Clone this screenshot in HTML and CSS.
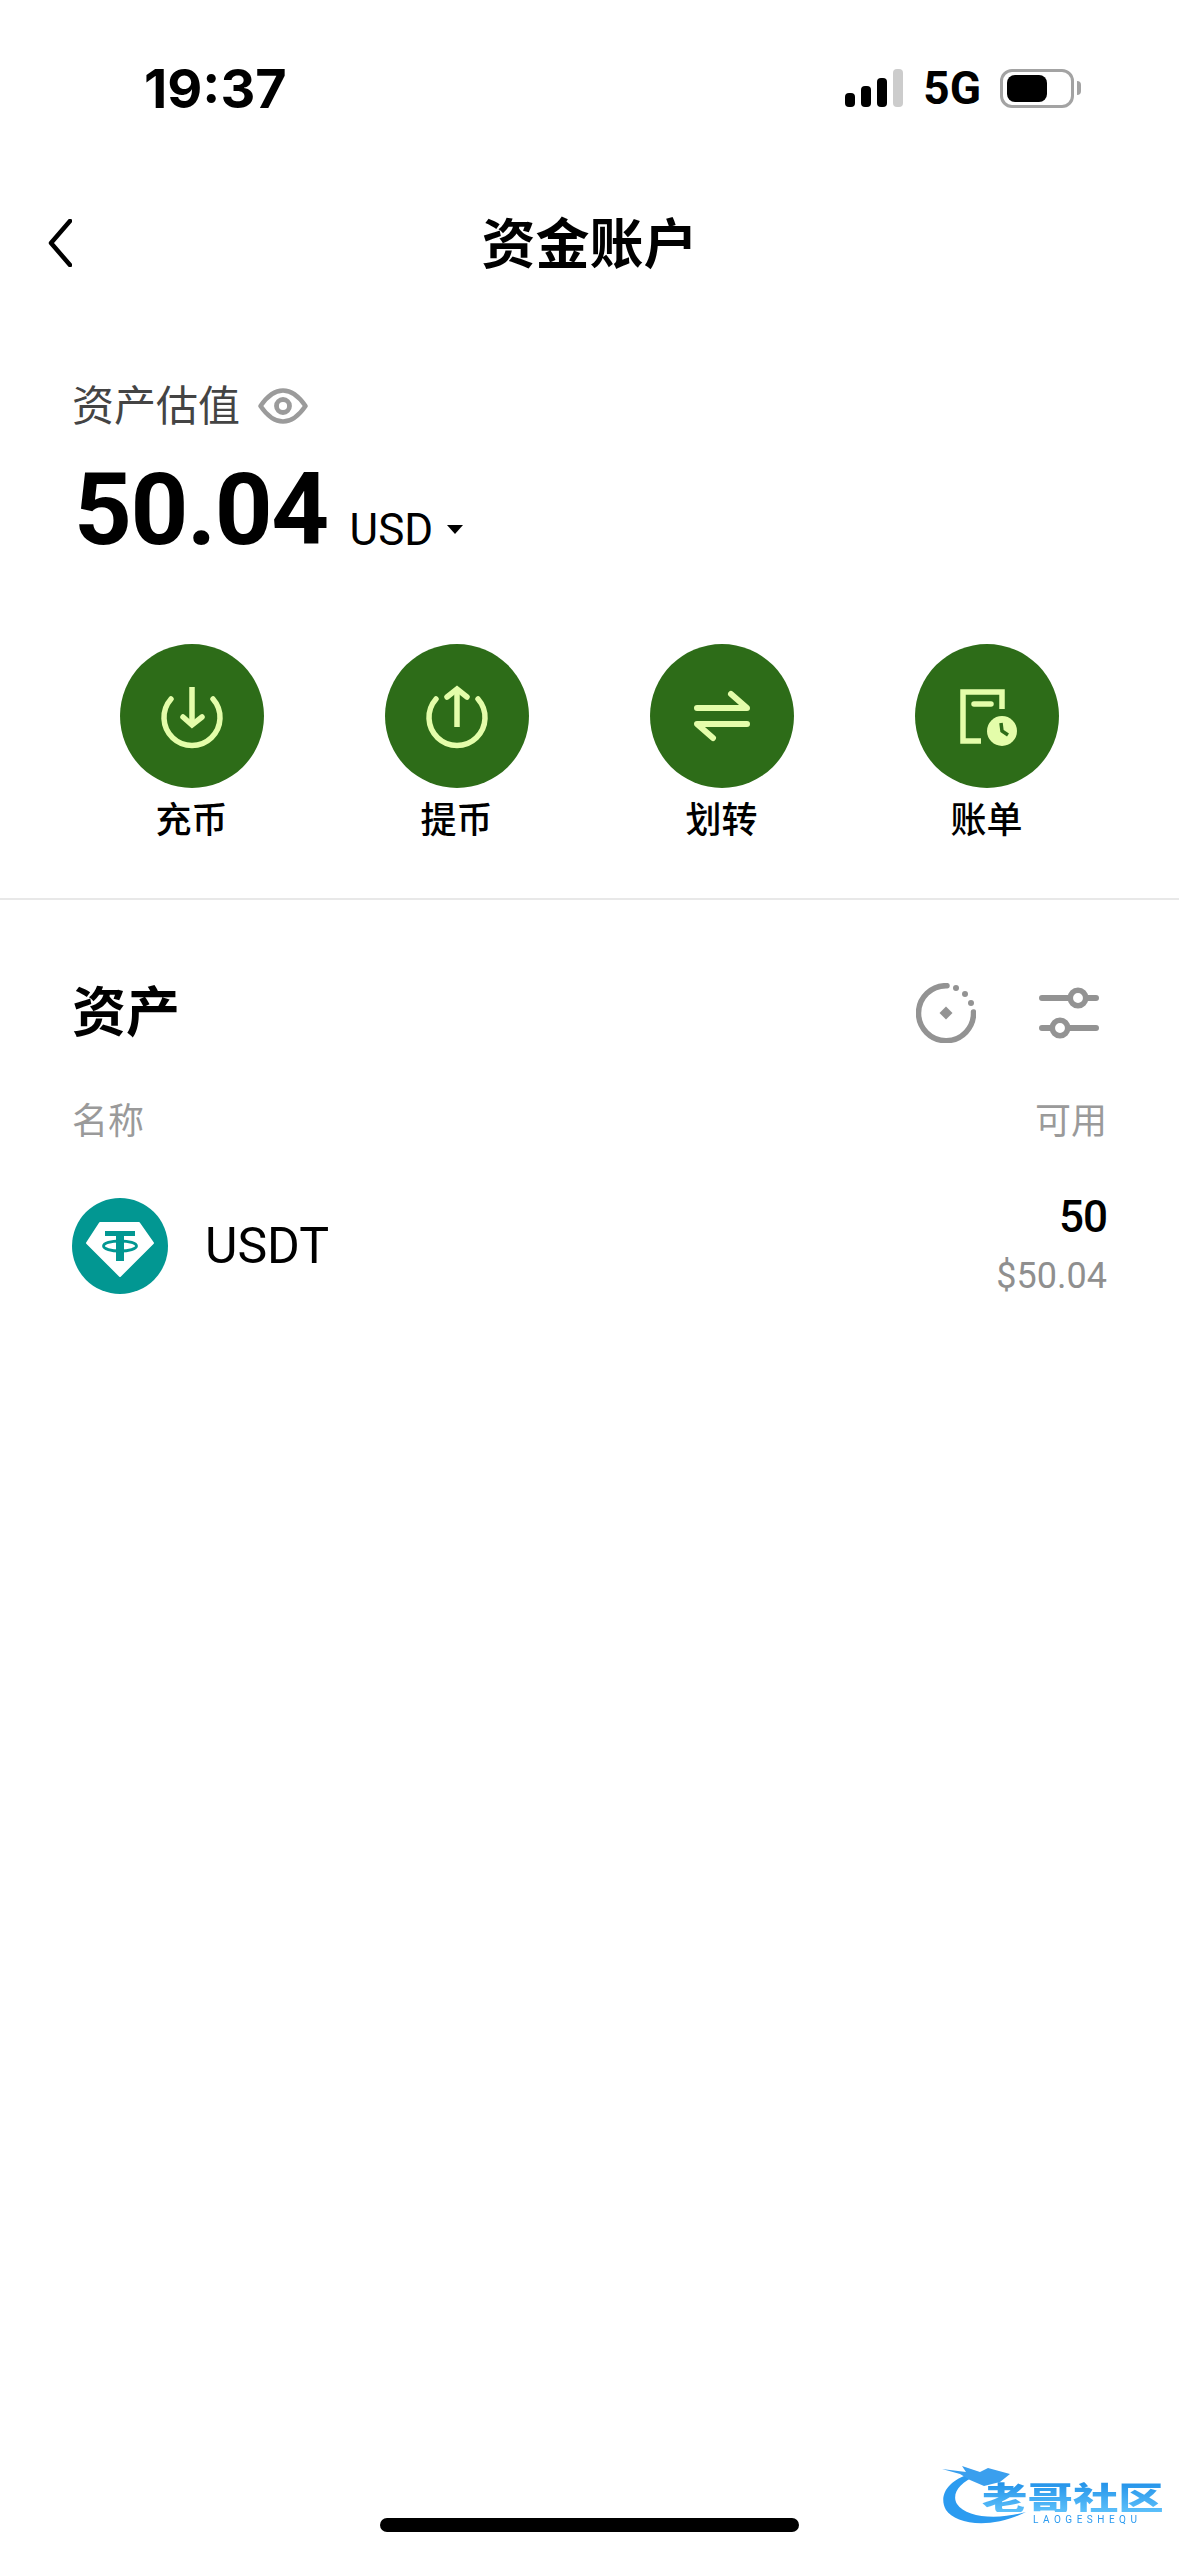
FILE: index.html
```html
<!DOCTYPE html>
<html lang="zh-CN">
<head>
    <meta charset="UTF-8">
    <meta name="viewport" content="width=device-width, initial-scale=1.0">
    <title>资金账户</title>
    <link rel="stylesheet" href="styles.css">
</head>
<body>
    <div class="page">

        <!-- Status bar -->
        <div class="status-bar">
            <span class="time">19:37</span>
            <div class="status-right">
                <div class="signal">
                    <i class="bar bar1"></i>
                    <i class="bar bar2"></i>
                    <i class="bar bar3"></i>
                    <i class="bar bar4"></i>
                </div>
                <span class="network">5G</span>
                <div class="battery"><i class="battery-fill"></i></div>
                <i class="battery-nub"></i>
            </div>
        </div>

        <!-- Nav -->
        <div class="nav">
            <svg class="back" viewBox="0 0 24 48" width="24" height="48">
                <polyline points="22,2 3,24 22,46" fill="none" stroke="#000" stroke-width="4.500" stroke-linecap="round" stroke-linejoin="round"/>
            </svg>
            <h1 class="nav-title">资金账户</h1>
        </div>

        <!-- Balance -->
        <div class="summary">
            <div class="summary-label">
                <span>资产估值</span>
                <svg viewBox="0 0 50 36" width="50" height="36">
                    <path d="M2.5 18C10 7 18 2.5 25 2.5S40 7 47.500 18C40 29 32 33.500 25 33.500S10 29 2.500 18Z" fill="none" stroke="#9b9b9b" stroke-width="4.500" stroke-linejoin="round"/>
                    <circle cx="25" cy="18" r="6.500" fill="none" stroke="#9b9b9b" stroke-width="4.800"/>
                </svg>
            </div>
            <div class="summary-amount">
                <span class="amount">50.04</span>
                <span class="currency">USD</span>
                <i class="caret"></i>
            </div>
        </div>

        <!-- Actions -->
        <div class="actions">
            <div class="action">
                <svg class="action-icon" viewBox="0 0 144 144">
                    <circle cx="72" cy="72" r="72" fill="#2d6c18"/>
                    <g fill="none" stroke="#e4fdaa" stroke-width="5.500" stroke-linecap="round" stroke-linejoin="miter">
                        <path d="M51 55A28 28 0 1 0 93 55"/>
                        <path d="M72 43V80" stroke-linecap="butt"/>
                        <path d="M63 73L72 81L82 73"/>
                    </g>
                </svg>
                <span>充币</span>
            </div>
            <div class="action">
                <svg class="action-icon" viewBox="0 0 144 144">
                    <circle cx="72" cy="72" r="72" fill="#2d6c18"/>
                    <g fill="none" stroke="#e4fdaa" stroke-width="5.500" stroke-linecap="round" stroke-linejoin="miter">
                        <path d="M51 55A28 28 0 1 0 93 55"/>
                        <path d="M72 46V83" stroke-linecap="butt"/>
                        <path d="M62 53L72 45L82 53"/>
                    </g>
                </svg>
                <span>提币</span>
            </div>
            <div class="action">
                <svg class="action-icon" viewBox="0 0 144 144">
                    <circle cx="72" cy="72" r="72" fill="#2d6c18"/>
                    <g fill="none" stroke="#e4fdaa" stroke-width="6" stroke-linecap="round" stroke-linejoin="round">
                        <path d="M47 64H97L81 50"/>
                        <path d="M97 80H47L63 94"/>
                    </g>
                </svg>
                <span>划转</span>
            </div>
            <div class="action">
                <svg class="action-icon" viewBox="0 0 144 144">
                    <circle cx="72" cy="72" r="72" fill="#2d6c18"/>
                    <path d="M66 97H48V48H87V65" fill="none" stroke="#e4fdaa" stroke-width="5.500"/>
                    <path d="M59 60H76" fill="none" stroke="#e4fdaa" stroke-width="5.500" stroke-linecap="round"/>
                    <circle cx="87" cy="87" r="15" fill="#e4fdaa"/>
                    <path d="M86 79L87 87L93 91" fill="none" stroke="#2d6c18" stroke-width="3.500"/>
                </svg>
                <span>账单</span>
            </div>
        </div>

        <div class="divider"></div>

        <!-- Assets -->
        <div class="assets">
            <div class="assets-header">
                <h2 class="assets-title">资产</h2>
                <div class="assets-tools">
                    <svg viewBox="0 0 60 60" width="60" height="60">
                        <path d="M31 2.700A27.500 27.500 0 1 0 57.500 29" fill="none" stroke="#939393" stroke-width="5.500" stroke-linecap="round"/>
                        <circle cx="40" cy="5" r="3" fill="#939393"/>
                        <circle cx="49" cy="11" r="3" fill="#939393"/>
                        <circle cx="55" cy="20" r="3" fill="#939393"/>
                        <path d="M30 23.500L36.500 30L30 36.500L23.500 30Z" fill="#939393"/>
                    </svg>
                    <svg viewBox="0 0 60 60" width="60" height="60">
                        <path d="M3 15H57M3 45H57" fill="none" stroke="#939393" stroke-width="6" stroke-linecap="round"/>
                        <circle cx="39" cy="15" r="7.700" fill="#fff" stroke="#939393" stroke-width="5.500"/>
                        <circle cx="21" cy="45" r="7.700" fill="#fff" stroke="#939393" stroke-width="5.500"/>
                    </svg>
                </div>
            </div>

            <div class="table-head">
                <span>名称</span>
                <span>可用</span>
            </div>

            <div class="asset-row">
                <div class="asset-name">
                    <svg viewBox="0 0 96 96" width="96" height="96">
                        <circle cx="48" cy="48" r="48" fill="#029792"/>
                        <path d="M28 25H67L81 45L48 78L15 45Z" fill="#fff" stroke="#fff" stroke-width="2" stroke-linejoin="round"/>
                        <path d="M33 33H63V38H52V63H44V38H33Z" fill="#029792"/>
                        <ellipse cx="48" cy="48" rx="16.500" ry="5" fill="none" stroke="#029792" stroke-width="2.800"/>
                    </svg>
                    <span>USDT</span>
                </div>
                <div class="asset-values">
                    <span class="asset-qty">50</span>
                    <span class="asset-usd">$50.04</span>
                </div>
            </div>
        </div>

        <div class="home-bar"></div>

        <!-- Watermark -->
        <div class="watermark">
            <svg class="watermark-logo" viewBox="0 0 100 70" width="100" height="70">
                <path d="M30 12C8 18 -2 34 6 48C15 62 50 68 86 50C58 58 26 56 17 42C11 32 20 20 36 14Z" fill="#2b9bf0"/>
                <path d="M2 7L26 10L22 4L40 10L48 6L70 12L60 20L44 24L30 18L20 12Z" fill="#3a9fee"/>
            </svg>
            <span class="watermark-name">老哥社区</span>
            <span class="watermark-sub">LAOGESHEQU</span>
        </div>
    </div>
</body>
</html>
```

FILE: styles.css
```css
* {
    box-sizing: border-box;
}

body {
    margin: 0;
    background-color: #fff;
    color: #000;
    font-family: Roboto, "Noto Sans CJK SC", sans-serif;
}

h1, h2 {
    margin: 0;
}

i {
    display: block;
}

svg {
    display: block;
}

.page {
    position: relative;
    display: flex;
    flex-direction: column;
    width: 1179px;
    height: 2556px;
    overflow: hidden;
}

/* Status bar */
.status-bar {
    display: flex;
    justify-content: space-between;
    align-items: center;
    height: 176px;
    padding: 0 98px 0 144px;
}

.time {
    font-family: Inter, sans-serif;
    font-size: 54px;
    font-weight: 700;
}

.status-right {
    display: flex;
    align-items: center;
}

.signal {
    display: flex;
    align-items: flex-end;
    gap: 6px;
    height: 38px;
    margin-right: 20px;
}

.bar {
    width: 10px;
    background: #000;
    border-radius: 4px;
}

.bar1 { height: 14px; }
.bar2 { height: 21px; }
.bar3 { height: 29px; }
.bar4 { height: 38px; background: #ccc; }

.network {
    font-size: 46px;
    font-weight: 700;
    margin-right: 19px;
}

.battery {
    display: flex;
    align-items: center;
    width: 74px;
    height: 39px;
    padding: 0 4px;
    border: 3px solid #a3a3a3;
    border-radius: 12px;
}

.battery-fill {
    width: 40px;
    height: 27px;
    background: #000;
    border-radius: 8px;
}

.battery-nub {
    width: 4px;
    height: 14px;
    margin-left: 3px;
    background: #a3a3a3;
    border-radius: 0 4px 4px 0;
}

/* Nav */
.nav {
    position: relative;
    display: flex;
    justify-content: center;
    align-items: center;
    height: 130px;
}

.nav-title {
    font-size: 54px;
    font-weight: 700;
    line-height: 60px;
    margin-top: 9px;
}

.back {
    position: absolute;
    left: 48px;
    top: 43px;
}

/* Balance */
.summary {
    padding: 66px 72px 0;
}

.summary-label {
    display: flex;
    align-items: center;
    gap: 18px;
    height: 60px;
    font-size: 42px;
    color: #444;
}

.summary-label svg {
    margin-top: 7px;
}

.summary-amount {
    display: flex;
    align-items: baseline;
    height: 120px;
    margin-top: 18px;
}

.amount {
    font-size: 101px;
    font-weight: 700;
    line-height: 120px;
    letter-spacing: -1.500px;
    margin-left: 2px;
}

.currency {
    font-size: 44px;
    margin-left: 22px;
    transform: translateY(1px);
}

.caret {
    width: 0;
    height: 0;
    margin-left: 14px;
    border-left: 8px solid transparent;
    border-right: 8px solid transparent;
    border-top: 9px solid #000;
    transform: translateY(-10px);
}

/* Actions */
.actions {
    display: grid;
    grid-template-columns: repeat(4, 265px);
    padding: 74px 0 53px 59px;
}

.action {
    display: flex;
    flex-direction: column;
    align-items: center;
    gap: 8px;
    font-size: 36px;
    font-weight: 500;
    line-height: 50px;
    margin-bottom: -1px;
}

.action-icon {
    width: 144px;
    height: 144px;
}

.divider {
    height: 2px;
    background: #e8e8e8;
}

/* Assets */
.assets {
    padding: 73px 72px 0;
}

.assets-header {
    display: flex;
    justify-content: space-between;
    align-items: center;
    height: 80px;
}

.assets-title {
    font-size: 54px;
    font-weight: 700;
    line-height: 60px;
    margin-top: 2px;
}

.assets-tools {
    display: flex;
    gap: 63px;
    margin-right: 8px;
}

.table-head {
    display: flex;
    justify-content: space-between;
    margin-top: 44px;
    font-size: 36px;
    line-height: 50px;
    color: #9a9a9a;
}

.asset-row {
    display: flex;
    justify-content: space-between;
    align-items: center;
    height: 96px;
    margin-top: 51px;
}

.asset-name {
    display: flex;
    align-items: center;
    gap: 37px;
    font-size: 50px;
}

.asset-values {
    display: flex;
    flex-direction: column;
    align-items: flex-end;
    line-height: 58px;
}

.asset-qty {
    font-size: 44px;
    font-weight: 500;
    letter-spacing: -1px;
}

.asset-usd {
    font-size: 36px;
    color: #8f8f8f;
    transform: translateY(1px);
}

/* Home indicator */
.home-bar {
    align-self: center;
    width: 419px;
    height: 14px;
    margin-top: auto;
    margin-bottom: 24px;
    background: #000;
    border-radius: 7px;
}

/* Watermark sits over the page corner */
.watermark {
    position: absolute;
    left: 940px;
    top: 2462px;
    width: 224px;
    height: 70px;
    filter: blur(0.5px);
}

.watermark-logo {
    position: absolute;
    left: 0;
    top: 0;
}

.watermark-name {
    position: absolute;
    left: 42px;
    top: 18px;
    font-family: "Noto Sans CJK SC", sans-serif;
    font-size: 32px;
    font-weight: 900;
    line-height: 32px;
    white-space: nowrap;
    transform: scaleX(1.420);
    transform-origin: left center;
    background: linear-gradient(#1f8fe8, #5cc0fa);
    -webkit-background-clip: text;
    background-clip: text;
    color: transparent;
}

.watermark-sub {
    position: absolute;
    left: 93px;
    top: 53px;
    font-family: Roboto, sans-serif;
    font-size: 10px;
    line-height: 10px;
    letter-spacing: 4.500px;
    color: #2b9bf0;
}
```
